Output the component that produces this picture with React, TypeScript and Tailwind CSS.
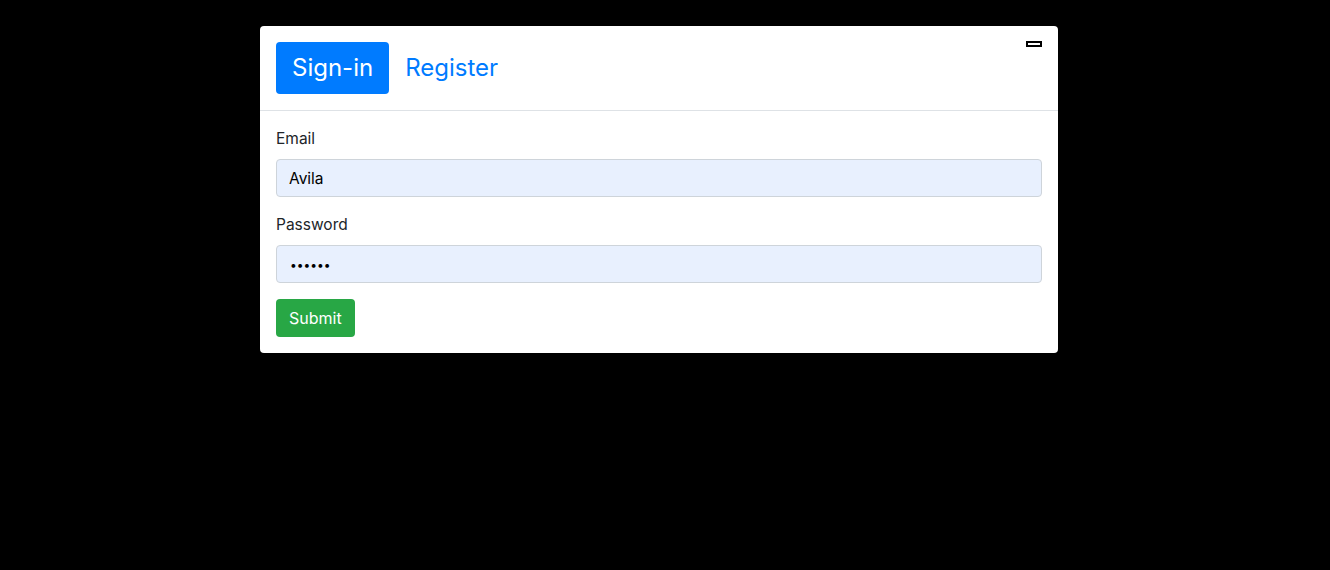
export default function App() {
  return (
    <div
      className="min-h-[570px] w-full bg-black pt-[26px]"
      style={{ fontFamily: 'Inter, "Noto Sans", sans-serif' }}
    >
      <div className="relative ml-[260px] w-[798px] rounded bg-white">
        {/* minimize control */}
        <div className="absolute right-4 top-[15px] h-[6px] w-4 border-2 border-black bg-white" />

        {/* tabs */}
        <div className="flex border-b border-[#dee2e6] p-4">
          <button className="rounded bg-[#007bff] px-4 py-2 text-2xl leading-9 text-white">
            Sign-in
          </button>
          <button className="px-4 py-2 text-2xl leading-9 text-[#007bff]">Register</button>
        </div>

        {/* form */}
        <form className="p-4 text-[15.5px] text-[#212529]">
          <div className="mb-4">
            <label className="mb-2 block leading-6">Email</label>
            <input
              defaultValue="Avila"
              className="block h-[38px] w-full rounded border border-[#ced4da] bg-[#e8f0fe] px-3 text-[15.5px] text-black outline-none"
            />
          </div>
          <div className="mb-4">
            <label className="mb-2 block leading-6">Password</label>
            <input
              type="password"
              defaultValue="123456"
              className="block h-[38px] w-full rounded border border-[#ced4da] bg-[#e8f0fe] pl-[13px] pr-3 text-[12px] text-black outline-none"
            />
          </div>
          <button
            type="button"
            className="h-[38px] rounded bg-[#28a745] px-[13px] text-base text-white"
          >
            Submit
          </button>
        </form>
      </div>
    </div>
  );
}
